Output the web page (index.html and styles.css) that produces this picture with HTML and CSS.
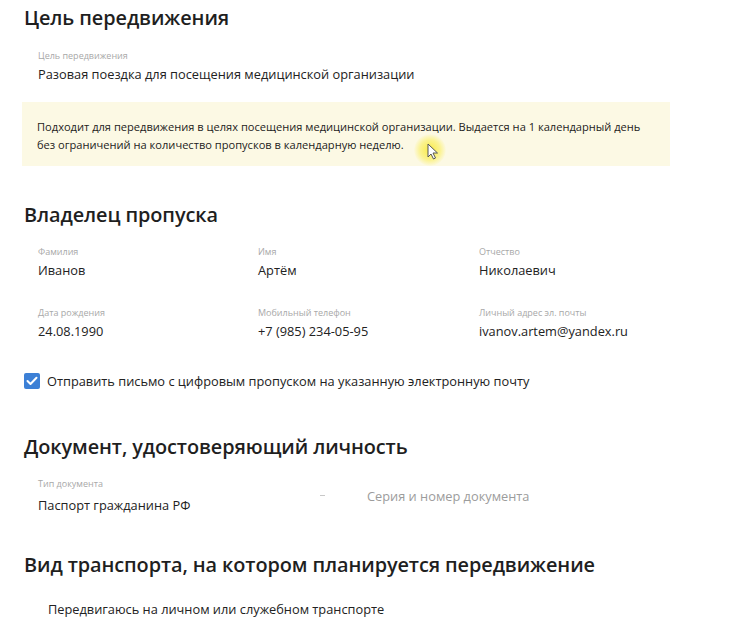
FILE: index.html
```html
<!DOCTYPE html>
<html lang="ru">
<head>
<meta charset="utf-8">
<title>Пропуск</title>
<link rel="stylesheet" href="styles.css">
</head>
<body>
<main class="page">
  <section class="section s-purpose">
    <h2 class="title">Цель передвижения</h2>
    <div class="field f-purpose">
      <div class="label">Цель передвижения</div>
      <div class="value">Разовая поездка для посещения медицинской организации</div>
    </div>
    <div class="notice">
      <p>Подходит для передвижения в целях посещения медицинской организации. Выдается на 1 календарный день<br>без ограничений на количество пропусков в календарную неделю.</p>
      <span class="cursor">
        <svg width="12" height="17" viewBox="0 0 12 17"><path d="M1 1 L1 14 L4 11 L6.5 16 L8.5 15 L6 10 L10.5 10 Z" fill="#fff" stroke="#555" stroke-width="1"/></svg>
      </span>
    </div>
  </section>

  <section class="section s-owner">
    <h2 class="title">Владелец пропуска</h2>
    <div class="grid">
      <div class="field"><div class="label">Фамилия</div><div class="value">Иванов</div></div>
      <div class="field"><div class="label">Имя</div><div class="value">Артём</div></div>
      <div class="field"><div class="label">Отчество</div><div class="value">Николаевич</div></div>
      <div class="field"><div class="label">Дата рождения</div><div class="value">24.08.1990</div></div>
      <div class="field"><div class="label">Мобильный телефон</div><div class="value">+7 (985) 234-05-95</div></div>
      <div class="field"><div class="label">Личный адрес эл. почты</div><div class="value">ivanov.artem@yandex.ru</div></div>
    </div>
    <label class="check">
      <span class="box"><svg width="12" height="10" viewBox="0 0 12 10"><path d="M1.5 5 L4.5 8 L10.5 1.8" fill="none" stroke="#fff" stroke-width="2" stroke-linecap="round" stroke-linejoin="round"/></svg></span>
      <span>Отправить письмо с цифровым пропуском на указанную электронную почту</span>
    </label>
  </section>

  <section class="section s-doc">
    <h2 class="title">Документ, удостоверяющий личность</h2>
    <div class="doc-row">
      <div class="field f-doctype">
        <div class="label">Тип документа</div>
        <div class="value">Паспорт гражданина РФ</div>
        <span class="arrow"></span>
      </div>
      <div class="placeholder">Серия и номер документа</div>
    </div>
  </section>

  <section class="section s-transport">
    <h2 class="title">Вид транспорта, на котором планируется передвижение</h2>
    <div class="option">Передвигаюсь на личном или служебном транспорте</div>
  </section>
</main>
</body>
</html>
```
FILE: styles.css
```css
html, body {
  margin: 0;
  padding: 0;
  background: #fff;
}
body {
  font-family: "Open Sans", "Noto Sans", sans-serif;
  color: #222;
  width: 750px;
  height: 626px;
  overflow: hidden;
}
.page {
  padding: 5px 0 0 24px;
}
.title {
  margin: 0;
  font-size: 19.9px;
  font-weight: 600;
  line-height: 26px;
  color: #1f1f1f;
  letter-spacing: -0.1px;
}
.field {
  display: flex;
  flex-direction: column;
}
.label {
  font-size: 9px;
  line-height: 12px;
  color: #a8a8a8;
}
.value {
  font-size: 12.8px;
  line-height: 16px;
  color: #222;
  margin-top: 4px;
}
.f-purpose {
  margin: 19px 0 0 14px;
}
.notice {
  position: relative;
  margin-top: 20px;
  width: 648px;
  height: 64px;
  margin-left: -2px;
  background: #fcf9e4;
  padding: 16px 15px 0;
  box-sizing: border-box;
}
.notice p {
  margin: 0;
  font-size: 11.1px;
  line-height: 18px;
  color: #1c1c1c;
}
.cursor {
  position: absolute;
  left: 392px;
  top: 32px;
  width: 32px;
  height: 32px;
  border-radius: 50%;
  background: radial-gradient(circle, rgba(250, 235, 60, 0.95) 0%, rgba(250, 238, 90, 0.6) 45%, rgba(252, 245, 150, 0) 72%);
  display: flex;
  align-items: center;
  justify-content: center;
}
.cursor svg {
  margin: 2px 0 0 6px;
}
.s-owner {
  margin-top: 36px;
}
.grid {
  display: grid;
  grid-template-columns: 220px 221px 220px;
  row-gap: 29px;
  margin: 18px 0 0 14px;
}
.check {
  display: flex;
  align-items: center;
  gap: 7px;
  height: 18px;
  margin-top: 33px;
  font-size: 12.8px;
  color: #222;
}
.box {
  width: 16px;
  height: 16px;
  border-radius: 2px;
  background: #3c80d6;
  display: flex;
  align-items: center;
  justify-content: center;
}
.s-doc {
  margin-top: 44px;
}
.doc-row {
  display: flex;
  align-items: center;
  margin: 18px 0 0 14px;
}
.f-doctype {
  position: relative;
  width: 329px;
}
.f-doctype .value {
  margin-top: 7px;
}
.arrow {
  position: absolute;
  left: 282px;
  top: 17px;
  width: 5px;
  height: 1px;
  background: #c8c8c8;
}
.placeholder {
  font-size: 12.8px;
  color: #9c9c9c;
  margin-top: 0;
}
.s-transport {
  margin-top: 39px;
}
.option {
  margin: 23px 0 0 24px;
  font-size: 12.8px;
  line-height: 16px;
  color: #222;
}
```
